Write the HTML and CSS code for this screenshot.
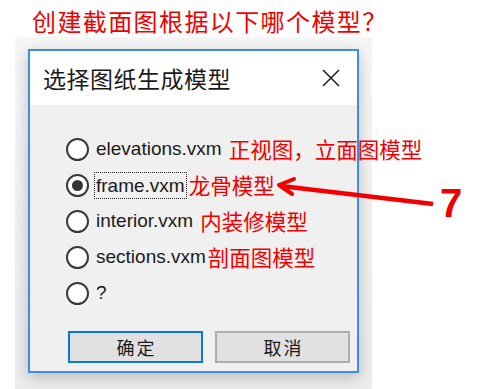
FILE: index.html
```html
<!DOCTYPE html>
<html lang="zh">
<head>
<meta charset="utf-8">
<link rel="stylesheet" href="styles.css">
</head>
<body>
<div class="page">
  <h1 class="question">创建截面图根据以下哪个模型？</h1>
  <div class="shot">
    <div class="dialog">
      <div class="titlebar">
        <span class="title">选择图纸生成模型</span>
        <svg class="close" width="18" height="18" viewBox="0 0 18 18"><path d="M1 1L17 17M17 1L1 17" stroke="#222" stroke-width="1.6" fill="none"/></svg>
      </div>
      <div class="content">
        <div class="options">
          <div class="option"><span class="radio"></span><span class="label">elevations.vxm</span><span class="note note-a">正视图，立面图模型</span></div>
          <div class="option"><span class="radio checked"></span><span class="label focus">frame.vxm</span><span class="note note-b">龙骨模型</span></div>
          <div class="option"><span class="radio"></span><span class="label">interior.vxm</span><span class="note note-c">内装修模型</span></div>
          <div class="option"><span class="radio"></span><span class="label">sections.vxm</span><span class="note note-d">剖面图模型</span></div>
          <div class="option"><span class="radio"></span><span class="label">?</span></div>
        </div>
        <div class="buttons">
          <button class="btn default">确定</button>
          <button class="btn">取消</button>
        </div>
      </div>
    </div>
  </div>
  <svg class="arrow" width="478" height="389" viewBox="0 0 478 389">
    <path d="M433 204L281 186" stroke="#f20000" stroke-width="4.5" fill="none"/>
    <path d="M279 185L294 179M279 185L292 194" stroke="#f20000" stroke-width="4" stroke-linecap="round" fill="none"/>
  </svg>
  <span class="seven">7</span>
</div>
</body>
</html>
```

FILE: styles.css
```css
html, body {
  margin: 0;
  padding: 0;
  background: #fff;
}
.page {
  position: relative;
  width: 478px;
  height: 389px;
  overflow: hidden;
  font-family: "Liberation Sans", "Noto Sans CJK SC", sans-serif;
}
.question {
  margin: 0;
  padding: 6px 0 0 32px;
  height: 31px;
  font-family: "Noto Sans CJK SC", serif;
  font-weight: 400;
  font-size: 24px;
  line-height: 30px;
  color: #f00000;
  letter-spacing: 1.4px;
  white-space: nowrap;
}
.shot {
  margin-left: 15px;
  width: 357px;
  height: 352px;
  box-sizing: border-box;
  padding: 12px 0 0 13px;
  background: linear-gradient(#f6f6f6, #ececec);
}
.dialog {
  width: 331px;
  height: 324px;
  box-sizing: border-box;
  border: 2px solid #3a8ee6;
  background: #f0f0f0;
  box-shadow: 0 4px 14px rgba(0, 0, 0, 0.22);
  display: flex;
  flex-direction: column;
}
.titlebar {
  height: 54px;
  background: #fff;
  display: flex;
  align-items: center;
  justify-content: space-between;
  padding: 0 17px 0 13px;
  flex-shrink: 0;
}
.title {
  font-family: "Noto Sans CJK SC", sans-serif;
  font-size: 23px;
  color: #1a1a1a;
  letter-spacing: 0.5px;
}
.close {
  display: block;
}
.content {
  flex: 1;
  padding: 32px 0 0 36px;
  display: flex;
  flex-direction: column;
}
.options {
  display: flex;
  flex-direction: column;
  gap: 12px;
}
.option {
  display: flex;
  align-items: center;
  height: 24px;
  white-space: nowrap;
}
.radio {
  width: 23px;
  height: 23px;
  box-sizing: border-box;
  border: 2px solid #3a3a3a;
  border-radius: 50%;
  background: #fff;
  margin-right: 5px;
  flex-shrink: 0;
  display: flex;
  align-items: center;
  justify-content: center;
}
.radio.checked::after {
  content: "";
  width: 11px;
  height: 11px;
  border-radius: 50%;
  background: #333;
}
.label {
  font-size: 19px;
  color: #1a1a1a;
  line-height: 24px;
  padding: 0 1px;
  border: 1px solid transparent;
  flex-shrink: 0;
}
.label.focus {
  border: 1px dotted #222;
  line-height: 25px;
}
.note {
  font-family: "Noto Sans CJK SC", serif;
  font-size: 21.5px;
  color: #f00000;
  line-height: 24px;
  margin-left: 5px;
  flex-shrink: 0;
}
.note-b { margin-left: 2px; }
.note-d { margin-left: 0; }
.buttons {
  margin-top: 26px;
  display: flex;
  gap: 12px;
  padding-left: 2px;
}
.btn {
  width: 135px;
  height: 32px;
  box-sizing: border-box;
  background: #e1e1e1;
  border: 2px solid #adadad;
  font-family: "Noto Sans CJK SC", sans-serif;
  font-size: 18px;
  color: #1a1a1a;
  padding: 0;
  letter-spacing: 2px;
  text-indent: 2px;
}
.btn.default {
  border: 2px solid #0a78d7;
}
.arrow {
  position: absolute;
  left: 0;
  top: 0;
  pointer-events: none;
}
.seven {
  position: absolute;
  left: 440px;
  top: 180px;
  font-family: "Liberation Sans", sans-serif;
  font-weight: 700;
  font-size: 40px;
  line-height: 46px;
  color: #f00000;
}
```
